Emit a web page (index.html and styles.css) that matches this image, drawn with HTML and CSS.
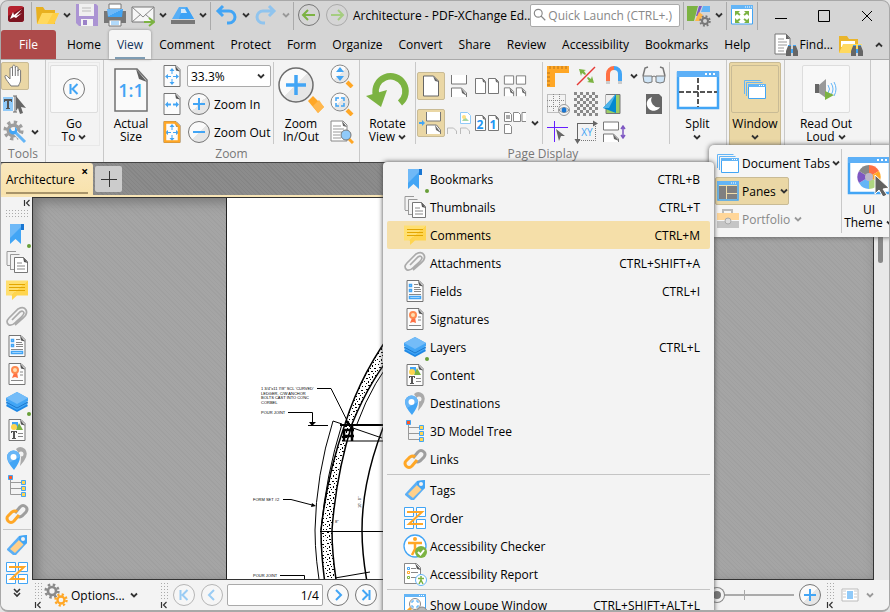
FILE: index.html
```
<!DOCTYPE html>
<html lang="en">
<head>
<meta charset="utf-8">
<meta name="viewport" content="width=device-width, initial-scale=1">
<title>Architecture - PDF-XChange Editor</title>
<link rel="stylesheet" href="styles.css">
</head>
<body>

<!-- icon sprite -->
<svg class="sprite" aria-hidden="true">
  <defs>
    <linearGradient id="gBlue" x1="0" y1="0" x2="1" y2="1"><stop offset=".5" stop-color="#6fb9f7"/><stop offset=".5" stop-color="#42a5f5"/></linearGradient>
    <linearGradient id="gYellow" x1="0" y1="0" x2="1" y2="1"><stop offset=".5" stop-color="#ffdf70"/><stop offset=".5" stop-color="#ffd54f"/></linearGradient>
    <linearGradient id="gGlass" x1="0" y1="0" x2="1" y2="1"><stop offset=".5" stop-color="#fafafa"/><stop offset=".5" stop-color="#e6e6e6"/></linearGradient>
    <pattern id="check" width="6" height="6" patternUnits="userSpaceOnUse"><path fill="#8a8a8a" d="M0 0h3v3h-3zM3 3h3v3h-3z"/></pattern>
    <pattern id="gravel" width="13" height="11" patternUnits="userSpaceOnUse">
      <path fill="#fff" d="M0 0h13v11h-13z"/>
      <path fill="#000" d="M1 1h1v1h-1zM4 0h2v1h-2zM8 2h1v2h-1zM11 1h1v1h-1zM2 4h2v1h-2zM6 5h1v1h-1zM10 5h2v1h-2zM0 7h1v1h-1zM4 7h1v2h-1zM7 8h2v1h-2zM11 8h1v1h-1zM2 9h1v1h-1zM9 10h1v1h-1zM5 3h1v1h-1z"/>
    </pattern>
  </defs>
  <symbol id="chev" viewBox="0 0 8 8"><path d="M1 2.500l3 3 3-3" fill="none" stroke="currentColor" stroke-width="1.800"/></symbol>
  <symbol id="dbl" viewBox="0 0 10 10"><path d="M2 1l3 3 3-3M2 5l3 3 3-3" fill="none" stroke="#333" stroke-width="1.600"/></symbol>
  <symbol id="collapse" viewBox="0 0 8 8"><path d="M1.500 1v6M6.500 1l-3 3 3 3" fill="none" stroke="#333" stroke-width="1.200"/></symbol>

  <symbol id="app" viewBox="0 0 24 24"><rect x="4" y="3" width="16" height="16" rx="3" fill="#b5222e"/><path d="M4 13L20 4v12a3 3 0 0 1-3 3H7a3 3 0 0 1-3-3z" fill="#7c1420"/><path d="M6 16l3-7 1 3 8-6-6 7 6-3-6 5-2-1z" fill="#fff"/></symbol>
  <symbol id="folder" viewBox="0 0 24 24"><path d="M1 4h7l2 3h10v14H2z" fill="#e8b020"/><path d="M2 21l5-11h17l-5 11z" fill="#ffd95f"/><path d="M12 21l6-11h6l-5 11z" fill="#ffcf45"/></symbol>
  <symbol id="save" viewBox="0 0 24 24"><path d="M1 1h20l2 2v20H4l-3-3z" fill="#ab94d3"/><path d="M4 1h15v12H4z" fill="#f0f0f0"/><path d="M7 5h9M7 8h9" stroke="#bbb"/><path d="M6 16h12v7H6z" fill="#f3f3f3"/><path d="M8 17h4v5H8z" fill="#9b82c8"/></symbol>
  <symbol id="print" viewBox="0 0 24 24"><path d="M6 1h12v5H6z" fill="#fff" stroke="#777"/><path d="M1 8h22v12H1z" fill="#777"/><path d="M4 6h16l-1 8H5z" fill="url(#gBlue)"/><path d="M6 17h12v6H6z" fill="#fff" stroke="#777"/><path d="M8 19h8M8 21h8" stroke="#64b5f6"/></symbol>
  <symbol id="mail" viewBox="0 0 24 24"><path d="M1 4h22v15H1z" fill="#f6f6f6" stroke="#777"/><path d="M1 19l9-8M23 19l-9-8M1 4l11 10L23 4" fill="none" stroke="#888"/><path d="M13 19h9M18 15l5 4-5 4" fill="none" stroke="#7cb342" stroke-width="2"/></symbol>
  <symbol id="scan" viewBox="0 0 24 24"><path d="M8 4h8l7 12H1z" fill="#58aff6"/><path d="M9 12l7-8 7 12H8z" fill="#3da2f5"/><path d="M10 6h4l2 4h-6z" fill="#d5e9fa"/><path d="M0 17h24v4H0z" fill="#777"/></symbol>
  <symbol id="undo" viewBox="0 0 24 24"><path d="M9 3L4 8l5 5M4 8h11a6 6 0 0 1 0 12h-2" fill="none" stroke="#42a5f5" stroke-width="3"/></symbol>
  <symbol id="redo" viewBox="0 0 24 24"><path d="M15 3l5 5-5 5M20 8H9a6 6 0 0 0 0 12h2" fill="none" stroke="#90c4ee" stroke-width="3"/></symbol>
  <symbol id="back" viewBox="0 0 24 24"><circle cx="12" cy="12" r="10.500" fill="none" stroke="#777"/><path d="M18 12H7M11 7l-5 5 5 5" fill="none" stroke="#7cb342" stroke-width="2"/></symbol>
  <symbol id="fwd" viewBox="0 0 24 24"><circle cx="12" cy="12" r="10.500" fill="none" stroke="#aaa"/><path d="M6 12h11M13 7l5 5-5 5" fill="none" stroke="#a5cd80" stroke-width="2"/></symbol>
  <symbol id="search" viewBox="0 0 16 16"><circle cx="6" cy="6" r="4.500" fill="none" stroke="#888" stroke-width="1.300"/><path d="M9 9l5 5" stroke="#888" stroke-width="1.500"/></symbol>
  <symbol id="gear" viewBox="0 0 24 24"><circle cx="12" cy="12" r="6" fill="none" stroke="currentColor" stroke-width="4"/><circle cx="12" cy="12" r="9.500" fill="none" stroke="currentColor" stroke-width="4" stroke-dasharray="3.700 3.760"/></symbol>
  <symbol id="custom" viewBox="0 0 24 24"><path d="M0 3h11L7 18H0z" fill="#7cb342"/><path d="M12 3h3l-4 10H9z" fill="#7e57c2"/><path d="M16 3h7v6h-9z" fill="#64b5f6"/><path d="M8 18l4-9 4 3-3 6z" fill="#ffb74d"/><svg x="12" y="12" width="12" height="12" viewBox="0 0 24 24" color="#777"><use href="#gear"/></svg></symbol>
  <symbol id="full" viewBox="0 0 24 24"><path d="M1.500 3h21v18h-21z" fill="#fff" stroke="#42a5f5"/><path d="M1 2h22v4H1z" fill="#64b5f6"/><path d="M15 4h7" stroke="#fff" stroke-dasharray="1 1"/><path d="M5 8h5l-5 5zM19 8h-5l5 5zM5 20h5l-5-5zM19 20h-5l5-5z" fill="#7cb342"/><path d="M6 9l4 3M18 9l-4 3M6 19l4-3M18 19l-4-3" stroke="#7cb342" stroke-width="2"/></symbol>
  <symbol id="bino" viewBox="0 0 12 12"><path d="M2 1h3v10H0V6zM7 1h3l2 5v5H7z" fill="#666"/><path d="M5 4h2v4H5zM2 0h3v1H2zM7 0h3v1H7z" fill="#42a5f5"/></symbol>
  <symbol id="finddoc" viewBox="0 0 24 24"><path d="M1 1h11l4 4v16H1z" fill="#fff" stroke="#777"/><path d="M12 1v5h4z" fill="#666"/><path d="M4 6h6M4 9h9M4 12h9M4 15h6M4 18h6" stroke="#999"/><svg x="12" y="12" width="12" height="12"><use href="#bino"/></svg></symbol>
  <symbol id="findfolder" viewBox="0 0 24 24"><path d="M0 3h8l2 3h9v14H0z" fill="#eab52b"/><path d="M2 8h14v6H2z" fill="#fff"/><path d="M0 20l4-9h19l-4 9z" fill="#ffd95f"/><svg x="12" y="12" width="12" height="12"><use href="#bino"/></svg></symbol>

  <symbol id="hand" viewBox="0 0 24 24"><path d="M8 22c-2-3-5-6-6-9-.5-2 1.500-2 2.500-.5L7 15V5c0-2 2.500-2 2.500 0V3c0-2.500 2.800-2.500 2.800 0v1c0-2 2.700-2 2.700 0v3c0-2 2.600-2 2.600 0v9c0 3-2 4-2 6z" fill="#fff" stroke="#777"/><path d="M9.500 5v7M12.300 4v8M15 6v6" stroke="#777"/></symbol>
  <symbol id="select" viewBox="0 0 24 24"><path d="M0 5h10v14H0z" fill="#90caf9"/><path d="M1 7h8v3H8V9H6v7h1v1H3v-1h1V9H2v1H1z" fill="#555"/><path d="M10 4h4M12 4v16M10 20h4" stroke="#666"/><path d="M13 4l10 12-5-1 2 6-3 1-2-6-2 3z" fill="#666"/></symbol>
  <symbol id="tools" viewBox="0 0 24 24"><svg x="0" y="0" width="21" height="21" viewBox="0 0 24 24" color="#9e9e9e"><use href="#gear"/></svg><path d="M11 11l11 11" stroke="#f3f3f3" stroke-width="5"/><path d="M11 11l11 11" stroke="#64b5f6" stroke-width="3"/><path d="M7 8a4 4 0 1 0 5-1v4H9z" fill="#42a5f5"/></symbol>
  <symbol id="first" viewBox="0 0 24 24"><circle cx="12" cy="12" r="10.500" fill="#fafafa" stroke="#777"/><path d="M8.500 7v10M15.500 7l-5 5 5 5" fill="none" stroke="#42a5f5" stroke-width="2"/></symbol>
  <symbol id="prev" viewBox="0 0 24 24"><circle cx="12" cy="12" r="10.500" fill="#fafafa" stroke="#777"/><path d="M14 7l-5 5 5 5" fill="none" stroke="#42a5f5" stroke-width="2"/></symbol>
  <symbol id="next" viewBox="0 0 24 24"><circle cx="12" cy="12" r="10.500" fill="#fafafa" stroke="#777"/><path d="M10 7l5 5-5 5" fill="none" stroke="#42a5f5" stroke-width="2"/></symbol>
  <symbol id="last" viewBox="0 0 24 24"><circle cx="12" cy="12" r="10.500" fill="#fafafa" stroke="#777"/><path d="M15.500 7v10M8.500 7l5 5-5 5" fill="none" stroke="#42a5f5" stroke-width="2"/></symbol>
  <symbol id="sheet" viewBox="0 0 24 24"><path d="M4 1.500h12l4 4v17H4z" fill="#fcfcfc" stroke="#757575"/><path d="M15 1.500l5 6-4-1z" fill="#555"/></symbol>
  <symbol id="fitpage" viewBox="0 0 24 24"><use href="#sheet"/><path d="M12 6v4M12 15v4M7 12.500h4M13 12.500h4" stroke="#42a5f5" stroke-width="1"/><path d="M12 4l-2.500 3h5zM12 21l-2.500-3h5zM5 12.500l3-2.500v5zM19 12.500l-3-2.500v5z" fill="#42a5f5"/></symbol>
  <symbol id="fitwidth" viewBox="0 0 24 24"><use href="#sheet"/><path d="M5 12.500l3-3v2h3v2H8v2zM19 12.500l-3-3v2h-3v2h3v2z" fill="#42a5f5"/></symbol>
  <symbol id="fitvis" viewBox="0 0 24 24"><use href="#fitpage"/><path d="M5 2.500h10l4 4v15H5z" fill="none" stroke="#ffa726" stroke-width="2.500"/></symbol>
  <symbol id="plus" viewBox="0 0 24 24"><circle cx="12" cy="12" r="10.500" fill="url(#gGlass)" stroke="#777"/><path d="M6 12h12M12 6v12" stroke="#42a5f5" stroke-width="2"/></symbol>
  <symbol id="minus" viewBox="0 0 24 24"><circle cx="12" cy="12" r="10.500" fill="url(#gGlass)" stroke="#777"/><path d="M6 12h12" stroke="#42a5f5" stroke-width="2"/></symbol>
  <symbol id="bigzoom" viewBox="0 0 46 46"><path d="M30 34l5-5 11 11-6 6z" fill="#ffa726"/><path d="M35 39l6-6 5 7-6 6z" fill="#ffb74d"/><circle cx="18" cy="18" r="17" fill="url(#gGlass)" stroke="#6d6d6d" stroke-width="1.500"/><path d="M8 18h20M18 8v20" stroke="#42a5f5" stroke-width="3.500"/></symbol>
  <symbol id="zoomud" viewBox="0 0 24 24"><path d="M17 18l5 5" stroke="#ffa726" stroke-width="4"/><circle cx="10" cy="10" r="9" fill="url(#gGlass)" stroke="#888"/><path d="M10 3l4 5H6zM10 17l4-5H6z" fill="#42a5f5"/></symbol>
  <symbol id="zoomsel" viewBox="0 0 24 24"><path d="M17 18l5 5" stroke="#ffa726" stroke-width="4"/><circle cx="10" cy="10" r="9" fill="url(#gGlass)" stroke="#888"/><path d="M6 9V6h3M11 6h3v3M14 11v3h-3M9 14H6v-3" fill="none" stroke="#42a5f5" stroke-width="1.500"/></symbol>
  <symbol id="zoomdoc" viewBox="0 0 24 24"><path d="M1 1h12l4 4v16H1z" fill="#fff" stroke="#888"/><path d="M12 1l5 6-4-1z" fill="#666"/><path d="M3 6h8M3 9h11M3 12h9M3 15h7M3 18h8" stroke="#999"/><path d="M19 19l4 4" stroke="#ffa726" stroke-width="3"/><circle cx="16" cy="15" r="5" fill="#90caf9" stroke="#777"/></symbol>
  <symbol id="rotate" viewBox="0 0 44 40"><path d="M10 25A15 15 0 1 1 34 33" fill="none" stroke="#7cb342" stroke-width="6.500"/><path d="M0 26l21-6-6 17z" fill="#7cb342"/></symbol>

  <symbol id="single" viewBox="0 0 24 24"><path d="M4.500 2h10l5 5v15h-15z" fill="#fff" stroke="#666"/><path d="M14 2l6 6-4-1z" fill="#666"/></symbol>
  <symbol id="cont" viewBox="0 0 24 24"><path d="M4.500 1v9h15V1M4.500 23v-9h10l5 5v4" fill="#fff" stroke="#777"/><path d="M14 14l6 8-5-3z" fill="#666"/></symbol>
  <symbol id="two" viewBox="0 0 24 24"><path d="M.5 4.500h7l3 3v12H.5zM13.500 4.500h7l3 3v12h-10z" fill="#fff" stroke="#777"/><path d="M7 4l4 5-3-1zM20 4l4 5-3-1z" fill="#666"/></symbol>
  <symbol id="twocont" viewBox="0 0 26 24"><path d="M1.500 1v9h10V1zM14.500 1v9h10V1zM1.500 23v-9h6l4 4v5M14.500 23v-9h6l4 4v5" fill="#fff" stroke="#777"/><path d="M7 14l5 7-4-2zM20 14l5 7-4-2z" fill="#666"/></symbol>
  <symbol id="gap" viewBox="0 0 24 24"><path d="M7.500 1v9h14V1M7.500 23v-9h10l4 5v4" fill="#fff" stroke="#777"/><path d="M16 14l6 8-5-3z" fill="#666"/><path d="M0 12h3" stroke="#42a5f5" stroke-width="2"/><path d="M3 9l3 3-3 3z" fill="#42a5f5"/></symbol>
  <symbol id="cover" viewBox="0 0 24 24"><path d="M13.500 1.500h7l3 3v8h-10z" fill="#fff" stroke="#90caf9"/><path d="M15 10l3-4 4 4z" fill="#a5d6a7"/><circle cx="17" cy="6" r="2" fill="#ffe082"/><path d="M.5 23v-6h6l3 3v3M13.500 23v-6h6l3 3v3" fill="none" stroke="#bbb"/></symbol>
  <symbol id="multi" viewBox="0 0 24 24"><path d="M1.500 1.500h5l2 2v7h-7zM10.500 1.500h5l2 2v7h-7zM23 1.500h-4v9h4M1.500 13.500h5l2 2v7h-7z" fill="#fff" stroke="#888"/><path d="M3 5h4M3 7h4" stroke="#555"/></symbol>
  <symbol id="ruler" viewBox="0 0 24 24"><path d="M1 2h22v7H9v14H1z" fill="#ffa726"/><path d="M4 2v3M8 2v3M12 2v3M16 2v3M20 2v3M1 9h3M1 13h3M1 17h3M1 21h3" stroke="#b8741b"/></symbol>
  <symbol id="snapl" viewBox="0 0 24 24"><path d="M3 21L21 3" stroke="#e53935" stroke-width="1.500"/><path d="M5 5l7 1-2 1 2 3-1 1-3-2-1 3zM20 19l-7-1 2-1-2-3 1-1 3 2 1-3z" fill="#7cb342"/></symbol>
  <symbol id="magnet" viewBox="0 0 24 24"><path d="M6 20V10a6 6 0 0 1 6-6" fill="none" stroke="#ff7043" stroke-width="4"/><path d="M12 4a6 6 0 0 1 6 6v10" fill="none" stroke="#42a5f5" stroke-width="4"/><path d="M4 17h4v3H4zM16 17h4v3h-4z" fill="#ccc"/></symbol>
  <symbol id="glasses" viewBox="0 0 24 24"><path d="M1 12L3 4l3-1M23 12l-2-8-3-1" fill="none" stroke="#777" stroke-width="1.500"/><path d="M1 12h9v6q-4 2-8 0zM14 12h9l-1 6q-4 2-8 0z" fill="#cfe5f7" stroke="#777"/><path d="M10 13q2-2 4 0" fill="none" stroke="#777"/></symbol>
  <symbol id="grid" viewBox="0 0 24 24"><path d="M1.500 2.500h18v18h-18zM7.500 2v18M13.500 2v18M1 8.500h18M1 14.500h18" fill="none" stroke="#888" stroke-dasharray="1 1"/><circle cx="18" cy="18" r="5.500" fill="#f3f3f3" stroke="#999"/><path d="M13 18q5-5 10 0-5 5-10 0z" fill="#fff" stroke="#888"/><circle cx="18" cy="18" r="2.500" fill="#1976d2"/></symbol>
  <symbol id="checker" viewBox="0 0 24 24"><path d="M0 0h24v24H0z" fill="url(#check)"/></symbol>
  <symbol id="contrast" viewBox="0 0 24 24"><path d="M4 2.500h14v19H4z" fill="#9ccc65" stroke="#777"/><path d="M4 3h9L4 15z" fill="#eee"/><path d="M14 2v19L1 16z" fill="#0288d1"/><path d="M14 2L1 16h6z" fill="#4fb3e8"/></symbol>
  <symbol id="night" viewBox="0 0 24 24"><path d="M4 2h13l3 3v17H4z" fill="#666"/><path d="M10 5a7 7 0 1 0 8 10A7 7 0 0 1 10 5z" fill="#fff"/></symbol>
  <symbol id="guides" viewBox="0 0 24 24"><path d="M8.500 1v21M1 7.500h21" stroke="#651fff" stroke-width="1"/><path d="M10 9l9 7h-4l-2 5z" fill="#666"/></symbol>
  <symbol id="spacing" viewBox="0 0 24 24"><path d="M1.500 2v8h15V2zM1.500 22v-8h10l5 5v3" fill="#fff" stroke="#777"/><path d="M11 14l6 7-5-2z" fill="#666"/><path d="M21 7v10M19 9l2-3 2 3M19 15l2 3 2-3" fill="none" stroke="#7e57c2" stroke-width="1.500"/></symbol>
  <symbol id="split" viewBox="0 0 44 40"><path d="M2 3h40v35H2z" fill="#fff" stroke="#42a5f5" stroke-width="2.500"/><path d="M1 1h42v6H1z" fill="#5db0f7"/><path d="M29 4h2M33 4h2M37 4h2" stroke="#fff" stroke-width="2"/><path d="M22 8v29M3 22h38" stroke="#555" stroke-width="2" stroke-dasharray="5 2"/></symbol>
  <symbol id="windows" viewBox="0 0 24 24"><path d="M1.500 17V3.500h16M3.500 19V5.500h16" fill="none" stroke="#64b5f6"/><path d="M5.500 7.500h17v14h-17z" fill="#fff" stroke="#42a5f5"/><path d="M5 7h18v3H5z" fill="#64b5f6"/><path d="M16 8.500h6" stroke="#fff" stroke-dasharray="1 1"/></symbol>
  <symbol id="speak" viewBox="0 0 24 24"><path d="M1 7h4v9H1z" fill="#666"/><path d="M5 8l7-6v19l-7-5z" fill="#999"/><path d="M14 8q3 4 0 8M17 6q4 6 0 12M20 5q4 7 0 14" fill="none" stroke="#64b5f6"/><path d="M11 14l9 4-9 5z" fill="#7cb342"/></symbol>
  <symbol id="panes" viewBox="0 0 24 24"><path d="M2 3h20v18H2z" fill="#f0dda9" stroke="#42a5f5" stroke-width="1.500"/><path d="M1 2h22v4H1z" fill="#64b5f6"/><path d="M15 4h6" stroke="#fff" stroke-dasharray="1 1"/><path d="M3 7h7v13H3zM11 7h10v7H11zM11 15h10v5H11z" fill="#808080"/></symbol>
  <symbol id="portfolio" viewBox="0 0 24 24"><path d="M7 6V3h9v3" fill="none" stroke="#bbb" stroke-width="2"/><path d="M1 6h22v7H1z" fill="#ffd699"/><path d="M1 14h22v7H1z" fill="#c5c5c5"/><circle cx="12" cy="14" r="3" fill="#ddd" stroke="#aaa"/></symbol>
  <symbol id="theme" viewBox="0 0 44 40"><path d="M2 3h41v34H2z" fill="#fff" stroke="#42a5f5" stroke-width="2.500"/><path d="M1 1h43v6H1z" fill="#5db0f7"/><path d="M30 4h2M34 4h2M38 4h2" stroke="#fff" stroke-width="2"/><g transform="translate(22 21)"><path d="M0 0V-12A12 12 0 0 1 10-6z" fill="#ff7043"/><path d="M0 0L10-6A12 12 0 0 1 10 6z" fill="#ffa726"/><path d="M0 0L10 6A12 12 0 0 1 0 12z" fill="#aed581"/><path d="M0 0V12A12 12 0 0 1-10 6z" fill="#64b5f6"/><path d="M0 0L-10 6A12 12 0 0 1-10-6z" fill="#7e57c2"/><path d="M0 0L-10-6A12 12 0 0 1 0-12z" fill="#888"/><circle r="4" fill="#bdb7c9"/></g><path d="M28 19l14 13-6 1 4 6-4 2-4-7-4 4z" fill="#616161" stroke="#fff"/></symbol>

  <!-- panes -->
  <symbol id="bookmark" viewBox="0 0 24 24"><path d="M5 2h14v6h-3v14l-5.500-5L5 22z" fill="#42a5f5"/><path d="M5 2h11v3L5 16z" fill="#6fb9f7"/><path d="M16 2h3v6h-3z" fill="#1976d2"/></symbol>
  <symbol id="thumbs" viewBox="0 0 24 24"><path d="M2 15V1.500h9M5.500 19V4.500h9" fill="none" stroke="#999"/><path d="M2 15.500h3M5 19.500h4" stroke="#999"/><path d="M9.500 7.500h9l4 4v11h-13z" fill="#fff" stroke="#777"/><path d="M18 7l5 6-4-1z" fill="#555"/><path d="M12 13h5M12 16h8M12 19h8" stroke="#888"/></symbol>
  <symbol id="comment" viewBox="0 0 24 24"><path d="M1 2.500h22v15H12l-5 4.500v-4.500H1z" fill="url(#gYellow)"/><path d="M4 6.500h16M4 9.500h16M4 12.500h16" stroke="#e3a600"/></symbol>
  <symbol id="clip" viewBox="0 0 24 24"><path d="M7 14l8-8q3-2 4 1 0 2-8 9-4 4-7 3-4-3 0-7l9-9q6-3 8 1 2 4-3 8l-8 7" fill="none" stroke="#aaa" stroke-width="1.700"/></symbol>
  <symbol id="fields" viewBox="0 0 24 24"><use href="#sheet"/><path d="M6.500 5.500h2v2h-2zM6.500 10.500h2v2h-2zM6.500 17.500h11v2h-11z" fill="#fff" stroke="#42a5f5" stroke-width="1.500"/><path d="M11 5.500h4M11 8.500h6M11 10.500h7M11 12.500h7M6 15.500h12" stroke="#888"/></symbol>
  <symbol id="sign" viewBox="0 0 24 24"><use href="#sheet"/><path d="M9 11l-2 5 3-1 3 1-1-6z" fill="#ff7043"/><circle cx="10" cy="8" r="3" fill="#ffe0b2" stroke="#ff8a50" stroke-width="2"/><path d="M15 10h3M15 13h3M6 18.500h12" stroke="#888"/></symbol>
  <symbol id="layers" viewBox="0 0 24 24"><path d="M1 16l11 6 11-6-2-3H3z" fill="#1e88e5"/><path d="M1 14l11 6 11-6-2-3H3z" fill="#42a5f5"/><path d="M1 12l11 6 11-6" fill="#42a5f5" stroke="#1e78cc"/><path d="M1 8l11-6 11 6v3l-11 6-11-6z" fill="#42a5f5"/><path d="M1 8l11-6 11 6-11 6z" fill="#74bcf8"/></symbol>
  <symbol id="content" viewBox="0 0 24 24"><use href="#sheet"/><path d="M7 4h6v6H7z" fill="#42a5f5"/><circle cx="9" cy="9" r="3" fill="#ffd54f"/><path d="M14 5l4 7h-7z" fill="#7cb342"/><path d="M6 13h6v2h-1v-1h-1v6h1v1H7v-1h1v-6H7v1H6z" fill="#555"/><path d="M13 15.500h5M13 18.500h5" stroke="#888"/></symbol>
  <symbol id="dest" viewBox="0 0 24 24"><path d="M11 3q4-4 9 0 4 5-1 12l-4 5q1-6 1-9z" fill="#aaa"/><circle cx="16" cy="8" r="2.500" fill="#f3f3f3"/><path d="M2 11a6.500 6.500 0 0 1 13 0q0 5-6 13Q2 16 2 11z" fill="#42a5f5"/><path d="M2 11a6.500 6.500 0 0 1 13 0L4 17z" fill="#68b6f7"/><circle cx="8.500" cy="11" r="3" fill="#fff"/></symbol>
  <symbol id="tree" viewBox="0 0 24 24"><path d="M5.500 4v16.500h12M5 8.500h12M5 14.500h12" fill="none" stroke="#999"/><path d="M3.500 1.500h4v4h-4z" fill="#ff5722" stroke="#42a5f5"/><path d="M16.500 6.500h4v4h-4zM16.500 12.500h4v4h-4zM16.500 18.500h4v4h-4z" fill="#ffd54f" stroke="#42a5f5"/></symbol>
  <symbol id="link" viewBox="0 0 24 24"><path d="M10 11l5-6q3-3 6 0 2 2 0 5l-4 4q-3 2-5 0" fill="none" stroke="#9e9e9e" stroke-width="3"/><path d="M14 13l-5 6q-3 3-6 0-2-3 0-5l4-4q3-2 5 0" fill="none" stroke="#ffa726" stroke-width="3"/></symbol>
  <symbol id="tag" viewBox="0 0 24 24"><path d="M2 16L14 3l8-1v8L11 22H8l-6-5z" fill="#5caff5"/><path d="M5 16l9-9 5 4-9 9z" fill="#ffd08a"/><path d="M14 3l8-1v8l-3 2-5-5z" fill="#42a5f5"/><circle cx="18" cy="6" r="2" fill="#f3f3f3"/></symbol>
  <symbol id="order" viewBox="0 0 24 24"><path d="M1.500 1.500h9v9h-9zM13.500 1.500h9v9h-9zM1.500 13.500h9v9h-9zM13.500 13.500h9v9h-9z" fill="#fff" stroke="#42a5f5"/><path d="M4 6h15L6 18h14" fill="none" stroke="#ffa726" stroke-width="2"/></symbol>
  <symbol id="acheck" viewBox="0 0 24 24"><circle cx="12" cy="12" r="11" fill="#fff" stroke="#42a5f5" stroke-width="1.300"/><circle cx="12" cy="5" r="2" fill="#ffa726"/><path d="M5 9h14M12 9v6l-3 6M12 14l4 6" fill="none" stroke="#ffa726" stroke-width="2.500"/><circle cx="18" cy="18" r="6" fill="#7cb342"/><path d="M15 18l2.500 2.500L21 16" fill="none" stroke="#fff" stroke-width="2"/></symbol>
  <symbol id="areport" viewBox="0 0 24 24"><path d="M1.500 1.500h12l4 4v16h-16z" fill="#fff" stroke="#888"/><path d="M12 1l6 7-4-1z" fill="#555"/><path d="M8 6.500h5M8 10.500h7M8 15.500h5" stroke="#888"/><path d="M4.500 5.500h2v2h-2z" fill="none" stroke="#42a5f5"/><path d="M4.500 9.500h2v2h-2z" fill="none" stroke="#ffa726"/><path d="M4.500 14.500h2v2h-2z" fill="none" stroke="#7cb342"/><circle cx="18" cy="18" r="5.500" fill="#fff" stroke="#64b5f6"/><path d="M15 16.500h6M18 14v4l-2 4M18 18l2 4" stroke="#7cb342" stroke-width="1.500" fill="none"/></symbol>
  <symbol id="loupe" viewBox="0 0 24 24"><path d="M1.500 2.500h21v20h-21z" fill="#fff" stroke="#42a5f5"/><path d="M1 1h22v3H1z" fill="#64b5f6"/><path d="M16 2.500h6" stroke="#fff" stroke-dasharray="1 1"/><path d="M8 15l-6 6" stroke="#ffa726" stroke-width="3"/><circle cx="12" cy="11" r="5.500" fill="#fff" stroke="#888"/><path d="M9 10V8h2M13 8h2v2M15 12v2h-2M11 14H9v-2" fill="none" stroke="#42a5f5"/><circle cx="19" cy="19" r="5" fill="#bbb" stroke="#888"/></symbol>
  <symbol id="gears" viewBox="0 0 24 24"><svg x="0" y="0" width="16" height="16" viewBox="0 0 24 24" color="#8a8a8a"><use href="#gear"/></svg><svg x="10" y="10" width="14" height="14" viewBox="0 0 24 24" color="#ffa726"><use href="#gear"/></svg></symbol>
  <symbol id="layout" viewBox="0 0 24 24"><path d="M4 6h16v12H4z" fill="#fff" stroke="#bbb"/><path d="M9 8h6v8H9z" fill="#90caf9"/><path d="M5 8h3M5 11h3M5 14h3M16 8h3M16 11h3M16 14h3" stroke="#ccc"/></symbol>
</svg>

<div class="app">
  <header class="titlebar">
    <button class="tool"><svg class="icon"><use href="#app"/></svg></button>
    <span class="vline"></span>
    <button class="tool"><svg class="icon"><use href="#folder"/></svg></button>
    <button class="drop"><svg class="chev"><use href="#chev"/></svg></button>
    <button class="tool"><svg class="icon"><use href="#save"/></svg></button>
    <button class="tool"><svg class="icon"><use href="#print"/></svg></button>
    <button class="tool"><svg class="icon"><use href="#mail"/></svg></button>
    <button class="drop"><svg class="chev"><use href="#chev"/></svg></button>
    <button class="tool"><svg class="icon"><use href="#scan"/></svg></button>
    <button class="drop"><svg class="chev"><use href="#chev"/></svg></button>
    <span class="vline"></span>
    <button class="tool"><svg class="icon"><use href="#undo"/></svg></button>
    <button class="drop"><svg class="chev"><use href="#chev"/></svg></button>
    <button class="tool"><svg class="icon"><use href="#redo"/></svg></button>
    <button class="drop off"><svg class="chev"><use href="#chev"/></svg></button>
    <span class="vline"></span>
    <button class="tool"><svg class="icon"><use href="#back"/></svg></button>
    <button class="tool"><svg class="icon"><use href="#fwd"/></svg></button>
    <span class="title">Architecture - PDF-XChange Ed..</span>
    <label class="search"><svg class="glass"><use href="#search"/></svg><input type="text" placeholder="Quick Launch (CTRL+.)" aria-label="Quick Launch"></label>
    <span class="vline"></span>
    <button class="tool"><svg class="icon"><use href="#custom"/></svg></button>
    <button class="drop"><svg class="chev"><use href="#chev"/></svg></button>
    <span class="vline"></span>
    <button class="tool"><svg class="icon"><use href="#full"/></svg></button>
    <span class="vline"></span>
    <button class="win"><svg viewBox="0 0 14 14"><path d="M1 9.500h12"/></svg></button>
    <button class="win"><svg viewBox="0 0 14 14"><path d="M1.500 1.500h11v11h-11z"/></svg></button>
    <button class="win"><svg viewBox="0 0 14 14"><path d="M2 2l10 10M12 2L2 12"/></svg></button>
  </header>

  <nav class="tabs">
    <button class="file">File</button>
    <button class="tab">Home</button>
    <button class="tab active">View</button>
    <button class="tab">Comment</button>
    <button class="tab">Protect</button>
    <button class="tab">Form</button>
    <button class="tab">Organize</button>
    <button class="tab">Convert</button>
    <button class="tab">Share</button>
    <button class="tab">Review</button>
    <button class="tab">Accessibility</button>
    <button class="tab">Bookmarks</button>
    <button class="tab">Help</button>
    <span class="find">
      <button class="findbtn"><svg class="icon"><use href="#finddoc"/></svg>Find...</button>
      <button class="findbtn wider"><svg class="icon"><use href="#findfolder"/></svg></button>
      <button class="findbtn"><svg class="chev flip"><use href="#chev"/></svg></button>
    </span>
  </nav>

  <section class="ribbon">
    <div class="group g-tools">
      <div class="body col">
        <button class="tool on"><svg class="icon"><use href="#hand"/></svg></button>
        <button class="tool"><svg class="icon"><use href="#select"/></svg></button>
        <div class="row"><button class="tool"><svg class="icon"><use href="#tools"/></svg></button><button class="drop"><svg class="chev"><use href="#chev"/></svg></button></div>
      </div>
      <div class="label">Tools</div>
    </div>
    <div class="group g-goto">
      <div class="body">
        <button class="big card"><span class="box"><svg class="icon"><use href="#first"/></svg></span><span>Go<br>To <svg class="chev"><use href="#chev"/></svg></span></button>
      </div>
    </div>
    <div class="group g-zoom">
      <div class="body">
        <button class="big actual"><span class="pic"><svg class="i36" viewBox="0 0 36 44"><path d="M2 1h22l10 11v31H2z" fill="#fafafa" stroke="#707070" stroke-width="1.500"/><path d="M23 1l11 13-8-3z" fill="#606060"/><text x="18" y="29" text-anchor="middle" class="one">1:1</text></svg></span><span>Actual<br>Size</span></button>
        <div class="col">
          <button class="tool"><svg class="icon"><use href="#fitpage"/></svg></button>
          <button class="tool"><svg class="icon"><use href="#fitwidth"/></svg></button>
          <button class="tool"><svg class="icon"><use href="#fitvis"/></svg></button>
        </div>
        <div class="col zoomcol">
          <div class="combo"><select aria-label="Zoom"><option>33.3%</option></select><svg class="chev"><use href="#chev"/></svg></div>
          <button class="wide"><svg class="icon"><use href="#plus"/></svg>Zoom In</button>
          <button class="wide"><svg class="icon"><use href="#minus"/></svg>Zoom Out</button>
        </div>
        <span class="split"></span>
        <button class="big zoomio"><span class="pic"><svg class="i46"><use href="#bigzoom"/></svg></span><span>Zoom<br>In/Out</span></button>
        <div class="col">
          <button class="tool"><svg class="icon"><use href="#zoomud"/></svg></button>
          <button class="tool"><svg class="icon"><use href="#zoomsel"/></svg></button>
          <button class="tool"><svg class="icon"><use href="#zoomdoc"/></svg></button>
        </div>
      </div>
      <div class="label">Zoom</div>
    </div>
    <div class="group g-display">
      <div class="body">
        <button class="big rotate"><span class="pic"><svg class="i44"><use href="#rotate"/></svg></span><span>Rotate<br>View <svg class="chev"><use href="#chev"/></svg></span></button>
        <span class="split"></span>
        <div class="layouts">
          <button class="tool on"><svg class="icon"><use href="#single"/></svg></button>
          <button class="tool"><svg class="icon"><use href="#cont"/></svg></button>
          <button class="tool"><svg class="icon"><use href="#two"/></svg></button>
          <button class="tool"><svg class="icon"><use href="#twocont"/></svg></button>
          <span></span>
          <button class="tool on"><svg class="icon"><use href="#gap"/></svg></button>
          <button class="tool"><svg class="icon"><use href="#cover"/></svg></button>
          <button class="tool"><svg class="icon" viewBox="0 0 24 24"><path d="M.5 4.500h7l3 3v12H.5zM13.500 4.500h7l3 3v12h-10z" fill="#fff" stroke="#777"/><path d="M7 4l4 5-3-1zM20 4l4 5-3-1z" fill="#666"/><text x="5" y="18" text-anchor="middle" class="num">2</text><text x="18" y="18" text-anchor="middle" class="num">1</text></svg></button>
          <button class="tool"><svg class="icon"><use href="#multi"/></svg></button>
          <button class="drop"><svg class="chev"><use href="#chev"/></svg></button>
        </div>
        <span class="split"></span>
        <div class="guides">
          <button class="tool"><svg class="icon"><use href="#ruler"/></svg></button>
          <button class="tool"><svg class="icon"><use href="#snapl"/></svg></button>
          <button class="tool"><svg class="icon"><use href="#magnet"/></svg></button>
          <button class="drop"><svg class="chev"><use href="#chev"/></svg></button>
          <button class="tool"><svg class="icon"><use href="#glasses"/></svg></button>
          <button class="tool"><svg class="icon"><use href="#grid"/></svg></button>
          <button class="tool"><svg class="icon"><use href="#checker"/></svg></button>
          <button class="tool"><svg class="icon"><use href="#contrast"/></svg></button>
          <span></span>
          <button class="tool"><svg class="icon"><use href="#night"/></svg></button>
          <button class="tool"><svg class="icon"><use href="#guides"/></svg></button>
          <button class="tool"><svg class="icon" viewBox="0 0 24 24"><path d="M3.500 3.500h17M3.500 3v18" fill="none" stroke="#666"/><path d="M24 3.500l-5-3v6zM3.500 24l-3-5h6z" fill="#666"/><path d="M21.500 6v14.500H5" fill="none" stroke="#777" stroke-dasharray="1 1"/><text x="13" y="16" text-anchor="middle" class="xytext">XY</text></svg></button>
          <button class="tool"><svg class="icon"><use href="#spacing"/></svg></button>
        </div>
        <span class="split"></span>
        <button class="big splitbtn"><span class="pic"><svg class="i44"><use href="#split"/></svg></span><span>Split<br><svg class="chev"><use href="#chev"/></svg></span></button>
      </div>
      <div class="label">Page Display</div>
    </div>
    <div class="group g-window">
      <div class="body">
        <button class="big card on"><span class="box"><svg class="icon"><use href="#windows"/></svg></span><span>Window<br><svg class="chev"><use href="#chev"/></svg></span></button>
      </div>
    </div>
    <div class="group g-read">
      <div class="body">
        <button class="big card"><span class="box"><svg class="icon"><use href="#speak"/></svg></span><span>Read Out<br>Loud <svg class="chev"><use href="#chev"/></svg></span></button>
      </div>
    </div>
  </section>

  <div class="doctabs">
    <div class="doctab"><span>Architecture</span><button class="close" aria-label="Close">×</button></div>
    <button class="newtab" aria-label="New tab"><svg viewBox="0 0 16 16"><path d="M8.500 0v16M0 8.500h16"/></svg></button>
  </div>

  <div class="work">
    <aside class="side">
      <button class="fold"><svg class="chev"><use href="#collapse"/></svg></button>
      <span class="grip"></span>
      <button class="pane dot"><svg class="icon"><use href="#bookmark"/></svg></button>
      <button class="pane"><svg class="icon"><use href="#thumbs"/></svg></button>
      <button class="pane"><svg class="icon"><use href="#comment"/></svg></button>
      <button class="pane"><svg class="icon"><use href="#clip"/></svg></button>
      <button class="pane"><svg class="icon"><use href="#fields"/></svg></button>
      <button class="pane"><svg class="icon"><use href="#sign"/></svg></button>
      <button class="pane dot"><svg class="icon"><use href="#layers"/></svg></button>
      <button class="pane"><svg class="icon"><use href="#content"/></svg></button>
      <button class="pane"><svg class="icon"><use href="#dest"/></svg></button>
      <button class="pane"><svg class="icon"><use href="#tree"/></svg></button>
      <button class="pane"><svg class="icon"><use href="#link"/></svg></button>
      <hr>
      <button class="pane"><svg class="icon"><use href="#tag"/></svg></button>
      <button class="pane"><svg class="icon"><use href="#order"/></svg></button>
      <button class="more"><svg class="dbl"><use href="#dbl"/></svg></button>
    </aside>

    <main class="main">
      <div class="view">
        <div class="canvas">
          <svg class="sheet" viewBox="227 198 469 400" width="470" height="400">
            <g fill="none" stroke="#000">
              <path d="M398 324Q362 370 345 424Q327 475 321 530Q321 560 327 597L339 597Q332 560 332 530Q336 475 352 424Q372 375 400 345z" fill="url(#gravel)" stroke-width="1.500"/>
              <path d="M333 421Q316 475 315 530Q315 560 322 597M333 421l9 3"/>
              <path d="M400 350Q373 380 357 424"/>
              <path d="M342 424Q326 475 321 530"/>
              <path d="M395 400Q362 470 362 530Q362 560 370 597" stroke-width="1.500"/>
              <path d="M340 425h60" stroke-width="2"/>
              <path d="M342 441h50M320 531.500h70M350 427l32 11M335 578l35-6"/>
              <path d="M344 430v11M352 426v15M343 430h11M343 436h11" stroke-width="2.500"/>
              <path d="M317 388.500h14l19 38M288 412.500h24.500v12M308 425.500h20M283 499.500h8l23 6M280 575.500h24.500v10" />
            </g>
            <path d="M312 426l-3-4h7zM316 506l-4-3-1 4zM350 427l-5-5 4-1z"/>
            <g class="note">
              <text x="261" y="390">1 3/4"x11 7/8" SCL 'CURVED'</text>
              <text x="261" y="395">LEDGER, C/W ANCHOR</text>
              <text x="261" y="399">BOLTS CAST INTO CONC</text>
              <text x="261" y="404">CORBEL</text>
              <text x="261" y="414">POUR JOINT</text>
              <text x="253" y="501">FORM SET #2</text>
              <text x="253" y="577">POUR JOINT</text>
              <text x="335" y="523">8"</text>
              <text x="0" y="0" transform="translate(361 508) rotate(-90)">10'- 0"</text>
            </g>
          </svg>
        </div>
        <div class="scroll"><span class="thumb"></span></div>
      </div>
      <footer class="status">
        <span class="handle"><span class="grip"></span><svg class="chev"><use href="#collapse"/></svg></span>
        <button class="wide"><svg class="icon"><use href="#gears"/></svg>Options... <svg class="chev"><use href="#chev"/></svg></button>
        <span class="handle nav"><span class="grip"></span><svg class="chev"><use href="#collapse"/></svg></span>
        <button class="tool dim"><svg class="icon"><use href="#first"/></svg></button>
        <button class="tool dim"><svg class="icon"><use href="#prev"/></svg></button>
        <input class="page" type="text" value="1/4" aria-label="Page">
        <button class="tool"><svg class="icon"><use href="#next"/></svg></button>
        <button class="tool"><svg class="icon"><use href="#last"/></svg></button>
        <span class="end">
          <input class="slider" type="range" min="0" max="100" value="0" aria-label="Zoom level">
          <button class="tool"><svg class="icon"><use href="#plus"/></svg></button>
          <span class="handle"><span class="grip"></span><svg class="chev"><use href="#collapse"/></svg></span>
          <button class="tool"><svg class="icon"><use href="#layout"/></svg></button>
          <button class="drop off"><svg class="chev"><use href="#chev"/></svg></button>
        </span>
      </footer>
    </main>
  </div>

  <!-- Window drop-down -->
  <div class="popup">
    <div class="col">
      <button class="wide"><svg class="icon"><use href="#windows"/></svg>Document Tabs <svg class="chev"><use href="#chev"/></svg></button>
      <button class="wide on"><svg class="icon"><use href="#panes"/></svg>Panes <svg class="chev"><use href="#chev"/></svg></button>
      <button class="wide off"><svg class="icon"><use href="#portfolio"/></svg>Portfolio <svg class="chev"><use href="#chev"/></svg></button>
    </div>
    <span class="split"></span>
    <button class="big"><span class="pic"><svg class="i44"><use href="#theme"/></svg></span><span>UI<br>Theme <svg class="chev"><use href="#chev"/></svg></span></button>
  </div>

  <!-- Panes menu -->
  <div class="menu">
    <button class="item dot"><svg class="icon"><use href="#bookmark"/></svg><span>Bookmarks</span><kbd>CTRL+B</kbd></button>
    <button class="item"><svg class="icon"><use href="#thumbs"/></svg><span>Thumbnails</span><kbd>CTRL+T</kbd></button>
    <button class="item hot"><svg class="icon"><use href="#comment"/></svg><span>Comments</span><kbd>CTRL+M</kbd></button>
    <button class="item"><svg class="icon"><use href="#clip"/></svg><span>Attachments</span><kbd>CTRL+SHIFT+A</kbd></button>
    <button class="item"><svg class="icon"><use href="#fields"/></svg><span>Fields</span><kbd>CTRL+I</kbd></button>
    <button class="item"><svg class="icon"><use href="#sign"/></svg><span>Signatures</span></button>
    <button class="item dot"><svg class="icon"><use href="#layers"/></svg><span>Layers</span><kbd>CTRL+L</kbd></button>
    <button class="item"><svg class="icon"><use href="#content"/></svg><span>Content</span></button>
    <button class="item"><svg class="icon"><use href="#dest"/></svg><span>Destinations</span></button>
    <button class="item"><svg class="icon"><use href="#tree"/></svg><span>3D Model Tree</span></button>
    <button class="item"><svg class="icon"><use href="#link"/></svg><span>Links</span></button>
    <hr>
    <button class="item"><svg class="icon"><use href="#tag"/></svg><span>Tags</span></button>
    <button class="item"><svg class="icon"><use href="#order"/></svg><span>Order</span></button>
    <button class="item"><svg class="icon"><use href="#acheck"/></svg><span>Accessibility Checker</span></button>
    <button class="item"><svg class="icon"><use href="#areport"/></svg><span>Accessibility Report</span></button>
    <hr>
    <button class="item"><svg class="icon"><use href="#loupe"/></svg><span>Show Loupe Window</span><kbd>CTRL+SHIFT+ALT+L</kbd></button>
  </div>
</div>
</body>
</html>
```
FILE: styles.css
```
* {
  box-sizing: border-box;
}

body {
  margin: 0;
  background: #e4e4e4;
  color: #000;
  font: 12px/13px "Open Sans", "Noto Sans", sans-serif;
}

button, input, select, kbd {
  font: inherit;
  color: inherit;
}

button {
  margin: 0;
  padding: 0;
  border: 0;
  background: none;
}

svg {
  flex: none;
}

.sprite {
  position: absolute;
  width: 0;
  height: 0;
}

.app {
  position: relative;
  display: flex;
  flex-direction: column;
  height: 100vh;
  overflow: hidden;
  border: 1px solid #a8a8a8;
  border-bottom: 2px solid #a8a8a8;
  border-radius: 8px;
  background: #d5d5d5;
}

.icon { width: 24px; height: 24px; }
.i36 { width: 36px; height: 44px; }
.i44 { width: 44px; height: 40px; }
.i46 { width: 46px; height: 46px; }
.chev { width: 8px; height: 8px; color: #333; }
.flip { transform: rotate(180deg); }
.off { color: #888; }
.off .chev { color: #999; }
.dim { opacity: 0.5; }

.row { display: flex; }
.col { display: flex; flex-direction: column; }

.one { font-size: 18px; font-weight: 600; fill: #42a5f5; }
.num { font-size: 12px; font-weight: bold; fill: #2196f3; }
.xytext { font-size: 10px; fill: #42a5f5; }
.note { font: 4px "Liberation Sans", Arial, sans-serif; }

.tool, .drop {
  display: flex;
  align-items: center;
  justify-content: center;
  width: 28px;
  height: 28px;
  flex: none;
}

.drop { width: 12px; }

.on {
  background: #ead7a5;
  border: 1px solid #c9bb95;
  border-radius: 2px;
}

/* title bar */
.titlebar {
  display: flex;
  align-items: center;
  height: 29px;
  flex: none;
  padding-left: 1px;
}

.titlebar .vline {
  width: 1px;
  height: 28px;
  margin: 0 1px;
  background: #aaa;
  flex: none;
}

.titlebar .tool, .titlebar .drop, .title, .search { margin-bottom: 1px; }

.title {
  flex: 1;
  margin-left: 2px;
  white-space: nowrap;
}

.search {
  display: flex;
  align-items: center;
  width: 152px;
  height: 23px;
  margin-right: 2px;
  padding-left: 2px;
  border: 1px solid #aaa;
  border-radius: 2px;
  background: #fff;
}

.glass { width: 14px; height: 14px; }

.search input {
  width: 100%;
  border: 0;
  padding: 0 1px;
  background: none;
  outline: none;
}

.search input::placeholder { color: #888; }

.win {
  display: flex;
  align-items: center;
  justify-content: center;
  width: 44px;
  height: 28px;
}

.win svg { width: 14px; height: 14px; fill: none; stroke: #000; }

/* ribbon tabs */
.tabs {
  display: flex;
  height: 30px;
  flex: none;
  border-bottom: 1px solid #aaa;
}

.file {
  width: 55px;
  margin-right: 3px;
  border-radius: 3px 3px 0 0;
  background: #ad4a4a;
  color: #fff;
}

.tab { padding: 0 8px; }

.tab.active {
  position: relative;
  border-radius: 3px 3px 0 0;
  background: #f5f5f5;
  box-shadow: 0 0 3px #888;
  color: #14375e;
}

.tab.active::after {
  content: "";
  position: absolute;
  left: 6px;
  right: 6px;
  bottom: 0;
  height: 2px;
  background: #7e9cb3;
}

.find {
  display: flex;
  margin-left: auto;
}

.findbtn {
  display: flex;
  align-items: center;
  gap: 2px;
  margin-right: 6px;
}

.findbtn.wider { margin-right: 12px; }

/* ribbon */
.ribbon {
  display: flex;
  height: 102px;
  flex: none;
  background: #f3f3f3;
}

.group {
  display: flex;
  flex-direction: column;
  border-right: 1px solid #c8c8c8;
  flex: none;
}

.body {
  display: flex;
  height: 86px;
  padding-top: 2px;
}

.label {
  color: #777;
  line-height: 16px;
  text-align: center;
}

.g-tools { width: 45px; }
.g-goto { width: 58px; padding-left: 2px; }
.g-zoom { width: 256px; }
.g-display { width: 367px; }
.g-window { width: 58px; padding-left: 2px; }
.g-read { width: 86px; padding-left: 15px; }

.split {
  width: 1px;
  margin-bottom: 2px;
  background: #c8c8c8;
  flex: none;
}

.big {
  display: flex;
  flex-direction: column;
  align-items: center;
  flex: none;
  white-space: nowrap;
}

.pic {
  display: flex;
  align-items: center;
  justify-content: center;
  height: 55px;
}

.card { width: 52px; border: 1px solid #e8e8e8; height: 84px; }
.card.on { border-color: #c9bb95; }

.box {
  display: flex;
  align-items: center;
  justify-content: center;
  width: 48px;
  height: 48px;
  margin: 2px 0 4px;
  border: 1px solid #ddd;
  border-radius: 2px;
  background: #f8f8f8;
}

.on .box { background: none; border-color: #c9bb95; }
.g-read .card { border-color: transparent; }

.actual { width: 54px; }
.zoomio { width: 54px; }
.rotate { width: 55px; }
.splitbtn { width: 55px; }
.zoomcol { width: 87px; padding-left: 1px; }

.combo {
  display: flex;
  align-items: center;
  height: 28px;
}

.combo select {
  appearance: none;
  width: 84px;
  height: 22px;
  padding: 0 3px;
  border: 1px solid #aaa;
  border-radius: 2px;
  background: #fff;
  flex: none;
}

.combo .chev { margin-left: -14px; pointer-events: none; }

.wide {
  display: flex;
  align-items: center;
  gap: 3px;
  height: 28px;
  white-space: nowrap;
}

.layouts {
  display: grid;
  grid-template-columns: repeat(4, 28px) 12px;
  gap: 9px 0;
  align-content: center;
  width: 126px;
  padding-left: 1px;
}

.guides {
  display: grid;
  grid-template-columns: repeat(3, 28px) 12px 28px;
  width: 126px;
  padding-left: 1px;
}

/* document tabs */
.doctabs {
  display: flex;
  height: 35px;
  flex: none;
  border-top: 1px solid #444;
  border-bottom: 2px solid #f8e5b6;
  background: #8a8a8a repeating-linear-gradient(45deg, #858585 0 1px, #8c8c8c 1px 3px);
}

.doctab {
  position: relative;
  display: flex;
  align-items: center;
  width: 92px;
  padding-left: 5px;
  border-radius: 3px 3px 0 0;
  background: linear-gradient(#fae8bf, #f8e2ab);
}

.doctab::after {
  content: "";
  position: absolute;
  left: 5px;
  right: 5px;
  bottom: 1px;
  height: 2px;
  background: #a8946a;
}

.close { align-self: flex-start; margin: 2px 0 0 auto; padding-right: 5px; font-weight: bold; }

.newtab {
  width: 27px;
  margin: 3px 2px;
  border-radius: 2px;
  background: #ccc;
}

.newtab svg { width: 16px; height: 16px; stroke: #333; vertical-align: middle; }

/* panes bar, document, status bar */
.work {
  display: flex;
  flex: 1;
  min-height: 0;
}

.side {
  display: flex;
  flex-direction: column;
  align-items: center;
  width: 31px;
  background: #f3f3f3;
  flex: none;
}

.side hr {
  width: 28px;
  margin: 1px 0;
  border: 0;
  border-top: 1px solid #c8c8c8;
}

.fold { align-self: flex-end; height: 12px; padding-right: 1px; line-height: 8px; }

.grip {
  width: 24px;
  height: 10px;
  background: radial-gradient(circle, #aaa 1px, transparent 1px) 0 0 / 3px 3px;
  flex: none;
}

.pane {
  display: flex;
  align-items: center;
  justify-content: center;
  width: 31px;
  height: 28px;
  flex: none;
}

.grip + .pane { margin-top: 1px; }

.dot { position: relative; }

.dot::after {
  content: "";
  position: absolute;
  left: 26px;
  bottom: 0;
  width: 4px;
  height: 4px;
  border-radius: 2px;
  background: #689f38;
}

.more { height: 12px; line-height: 10px; }
.dbl { width: 10px; height: 10px; }

.main {
  display: flex;
  flex-direction: column;
  flex: 1;
  min-width: 0;
}

.view {
  display: flex;
  flex: 1;
  min-height: 0;
}

.canvas {
  flex: 1;
  overflow: hidden;
  padding-left: 193px;
  border: 1px solid #333;
  background: repeating-linear-gradient(45deg, #a0a0a0 0 1px, #a5a5a5 1px 3px);
  box-shadow: inset 4px 4px 12px #777;
}

.sheet {
  display: block;
  background: #fff;
  border-left: 1px solid #222;
}

.scroll {
  width: 15px;
  padding: 24px 4px;
  background: #e8e8e8;
}

.thumb {
  display: block;
  width: 5px;
  height: 42px;
  border-radius: 3px;
  background: #888;
}

.status {
  display: flex;
  align-items: center;
  height: 30px;
  flex: none;
  background: #f3f3f3;
}

.handle {
  display: flex;
  flex-direction: column;
  width: 12px;
  padding-left: 2px;
  gap: 1px;
}

.handle .grip { width: 9px; height: 18px; }
.handle.nav { margin-left: 20px; }
.status .wide .chev { margin-left: 2px; }

.page {
  width: 96px;
  height: 22px;
  margin: 0 1px;
  padding: 0 3px;
  border: 1px solid #aaa;
  border-radius: 2px;
  background: #fff;
  text-align: right;
}

.end {
  display: flex;
  align-items: center;
  margin-left: auto;
  padding-right: 13px;
}

.slider {
  appearance: none;
  width: 84px;
  height: 14px;
  margin: 0 2px;
  background: linear-gradient(#aaa, #aaa) center / 100% 2px no-repeat, linear-gradient(#aaa, #aaa) 34px 50% / 1px 10px no-repeat;
}

.slider::-webkit-slider-thumb {
  appearance: none;
  width: 14px;
  height: 14px;
  border: 3px solid #f3f3f3;
  border-radius: 7px;
  background: #777;
  box-shadow: 0 0 0 1px #888;
}

/* pop-ups */
.popup {
  position: absolute;
  top: 144px;
  right: -3px;
  display: flex;
  width: 183px;
  padding: 4px 0 4px 6px;
  border-radius: 5px 0 0 5px;
  background: #f5f5f5;
  box-shadow: 0 0 5px #555;
}

.popup .col { width: 126px; align-items: flex-start; }
.popup .wide { padding: 0 1px; gap: 2px; }
.popup .wide.on { padding: 0; }
.popup .wide.on .chev, .popup .wide.off .chev { margin-left: 2px; }
.popup .split { margin-bottom: 0; }
.popup .pic { height: 54px; }
.popup .big { width: 54px; }

.menu {
  position: absolute;
  top: 161px;
  left: 382px;
  width: 331px;
  padding: 3px 4px;
  border-radius: 4px;
  background: #f3f3f3;
  box-shadow: 0 0 5px #444;
}

.item {
  display: flex;
  align-items: center;
  width: 100%;
  height: 28px;
  padding: 0 10px 0 16px;
  gap: 3px;
}

.item.hot { background: #f5dfa9; border-radius: 2px; }
.item.dot::after { left: 38px; }
.item kbd { margin-left: auto; }

.menu hr {
  margin: 1px 0;
  border: 0;
  border-top: 1px solid #c4c4c4;
}
```
